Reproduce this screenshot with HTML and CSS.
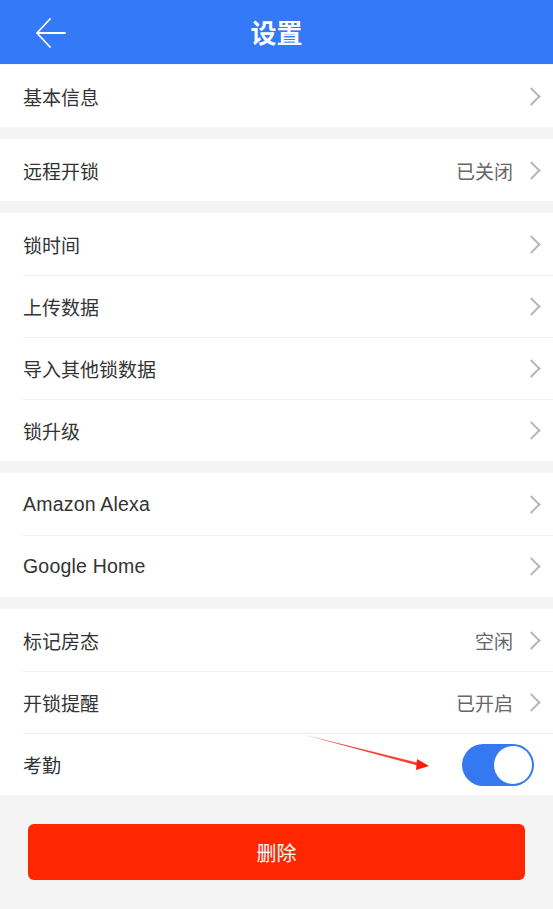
FILE: index.html
```html
<!DOCTYPE html>
<html lang="zh-CN">
<head>
    <meta charset="UTF-8">
    <meta name="viewport" content="width=device-width, initial-scale=1.0">
    <title>设置</title>
    <link rel="stylesheet" href="styles.css">
</head>
<body>
    <header class="topbar">
        <span class="back">
            <svg width="32" height="32" viewBox="0 0 32 32">
                <path d="M30 16H2M15 2L2 16L15 30" fill="none" stroke="#fff" stroke-width="1.8" stroke-linecap="round" stroke-linejoin="round"/>
            </svg>
        </span>
        <h1>设置</h1>
    </header>

    <div class="group">
        <div class="row"><span class="label">基本信息</span><span class="chev"></span></div>
    </div>
    <div class="group">
        <div class="row"><span class="label">远程开锁</span><span class="value">已关闭</span><span class="chev"></span></div>
    </div>
    <div class="group">
        <div class="row"><span class="label">锁时间</span><span class="chev"></span></div>
        <div class="row"><span class="label">上传数据</span><span class="chev"></span></div>
        <div class="row"><span class="label">导入其他锁数据</span><span class="chev"></span></div>
        <div class="row"><span class="label">锁升级</span><span class="chev"></span></div>
    </div>
    <div class="group">
        <div class="row"><span class="label latin">Amazon Alexa</span><span class="chev"></span></div>
        <div class="row"><span class="label latin">Google Home</span><span class="chev"></span></div>
    </div>
    <div class="group">
        <div class="row"><span class="label">标记房态</span><span class="value">空闲</span><span class="chev"></span></div>
        <div class="row"><span class="label">开锁提醒</span><span class="value">已开启</span><span class="chev"></span></div>
        <div class="row toggle-row">
            <span class="label">考勤</span>
            <span class="switch on"><span class="knob"></span></span>
            <svg class="pointer" width="130" height="40" viewBox="0 0 130 40">
                <polygon points="0,1 118,30 118,33" fill="#ff2a1a" opacity="0.9"/>
                <polygon points="112,25 124,32 111,36" fill="#ff1a0a"/>
            </svg>
        </div>
    </div>

    <div class="actions">
        <button class="delete-button">删除</button>
    </div>
</body>
</html>
```

FILE: styles.css
```css
body {
    margin: 0;
    padding: 0;
    background-color: #f4f4f4;
    font-family: "Noto Sans CJK SC", "Liberation Sans", sans-serif;
    color: #333;
}
.topbar {
    height: 64px;
    background-color: #3479f5;
    display: flex;
    align-items: center;
    justify-content: center;
    position: relative;
}
.topbar h1 {
    margin: 0;
    color: white;
    font-size: 26px;
    font-weight: bold;
    line-height: 1;
}
.back {
    position: absolute;
    left: 35px;
    top: 17px;
    width: 32px;
    height: 32px;
}
.group {
    background-color: white;
    padding-left: 23px;
    margin-bottom: 12px;
}
.group:first-of-type {
    margin-top: 1px;
}
.row {
    box-sizing: border-box;
    height: 62px;
    display: flex;
    align-items: center;
    padding-right: 13px;
    border-top: 1px solid #efefef;
    position: relative;
}
.row:first-child {
    border-top: none;
}
.label {
    flex: 1;
    font-size: 19px;
}
.label.latin {
    font-family: "Liberation Sans", "Noto Sans CJK SC", sans-serif;
    font-size: 19.5px;
    letter-spacing: 0.2px;
}
.value {
    font-size: 19px;
    color: #666;
    margin-right: 12px;
}
.chev {
    width: 11px;
    height: 11px;
    border-top: 2px solid #b8b8b8;
    border-right: 2px solid #b8b8b8;
    transform: rotate(45deg);
    margin-right: 2px;
}
.toggle-row {
    padding-right: 19px;
}
.switch {
    width: 72px;
    height: 42px;
    border-radius: 21px;
    background-color: #3479f0;
    position: relative;
}
.knob {
    position: absolute;
    right: 2px;
    top: 2px;
    width: 38px;
    height: 38px;
    border-radius: 50%;
    background-color: white;
}
.pointer {
    position: absolute;
    left: 282px;
    top: 0;
}
.actions {
    padding: 17px 28px 28px 28px;
}
.delete-button {
    width: 100%;
    height: 56px;
    border: none;
    border-radius: 6px;
    background-color: #ff2600;
    color: white;
    font-family: "Noto Sans CJK SC", sans-serif;
    font-size: 20px;
}
```
